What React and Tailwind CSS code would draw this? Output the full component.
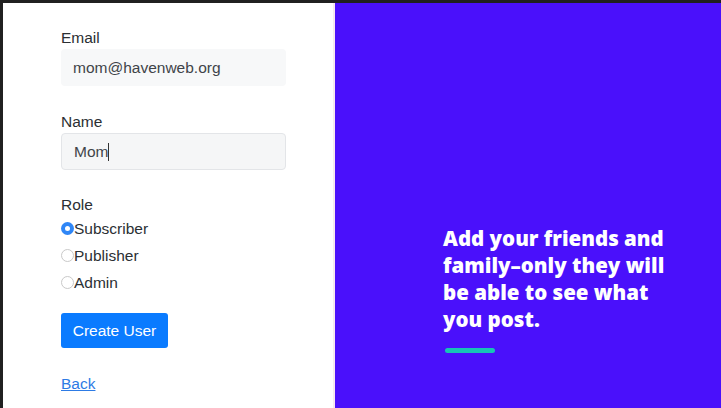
import React from "react";

function Radio({ checked, label }) {
  return (
    <div className="flex items-center h-[27px]">
      {checked ? (
        <span className="w-[13px] h-[13px] rounded-full bg-[#2f86f6] flex items-center justify-center">
          <span className="w-[5px] h-[5px] rounded-full bg-white" />
        </span>
      ) : (
        <span className="w-[13px] h-[13px] rounded-full border border-[#c9c9c9] bg-white" />
      )}
      <span className="text-[15.5px] text-[#2b2f33] leading-[22px]">{label}</span>
    </div>
  );
}

export default function App() {
  return (
    <div
      className="w-[721px] h-[408px] bg-[#202020] pt-[3px] pl-[3px] flex overflow-hidden"
      style={{ fontFamily: '"Liberation Sans", Arial, sans-serif' }}
    >
      <div className="w-[330px] h-full bg-white pl-[58px] flex flex-col">
        <div className="mt-[23px] text-[15.5px] leading-[23px] text-[#2b2f33]">Email</div>
        <div className="w-[225px] h-[37px] rounded-[4px] bg-[#f7f8f9] flex items-center pl-[12px] text-[15.5px] text-[#3f4449]">
          mom@havenweb.org
        </div>
        <div className="mt-[24px] text-[15.5px] leading-[23px] text-[#2b2f33]">Name</div>
        <div className="w-[225px] h-[37px] rounded-[4px] bg-[#f5f6f7] border border-[#e3e5e8] flex items-center pl-[12px] text-[15.5px] text-[#3f4449]">
          Mom<span className="inline-block w-px h-[18px] bg-[#333]" />
        </div>
        <div className="mt-[24px] text-[15.5px] leading-[21px] text-[#2b2f33]">Role</div>
        <Radio checked label="Subscriber" />
        <Radio label="Publisher" />
        <Radio label="Admin" />
        <button className="mt-[17px] w-[107px] h-[35px] rounded-[3px] bg-[#0a7bff] text-white text-[15.5px] flex items-center justify-center">
          Create User
        </button>
        <a href="#" className="mt-[25px] w-fit text-[15.5px] leading-[22px] text-[#2d7be5] underline">
          Back
        </a>
      </div>
      <div className="w-[2px] h-full bg-[#f6e9f0]" />
      <div className="flex-1 h-full bg-[#4a10fb] pl-[108px] pt-[222px]">
        <p
          className="text-white font-extrabold text-[20.5px] leading-[27px]"
          style={{ fontFamily: '"Open Sans", Lato, sans-serif' }}
        >
          Add your friends and
          <br />
          family–only they will
          <br />
          be able to see what
          <br />
          you post.
        </p>
        <div className="mt-[15px] ml-[2px] w-[50px] h-[5px] rounded-full bg-[#17c3b6]" />
      </div>
    </div>
  );
}
